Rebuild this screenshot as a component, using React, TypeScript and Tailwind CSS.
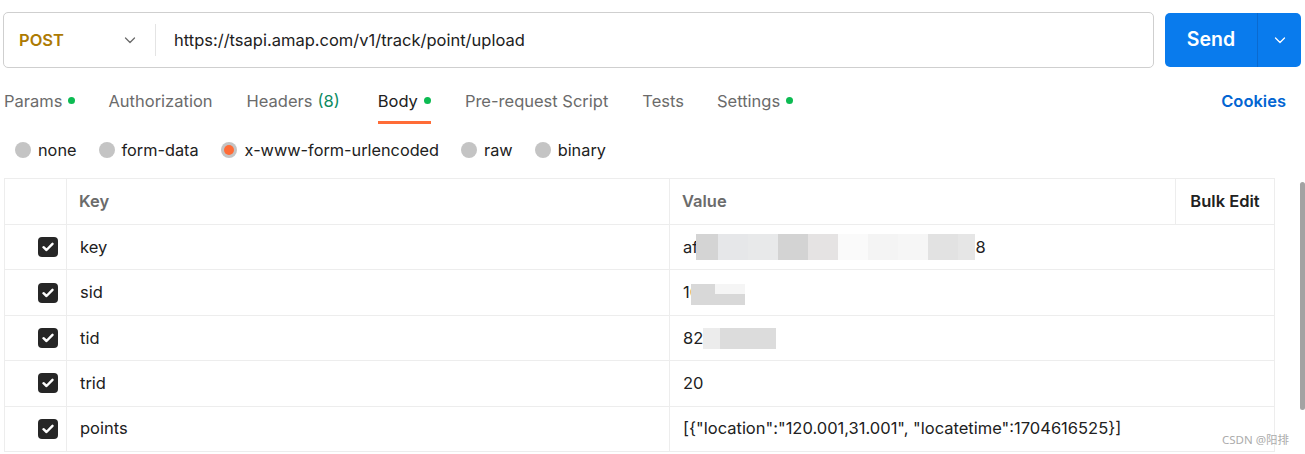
import React from "react";

const Check = () => (
  <div className="w-5 h-5 rounded-[4px] bg-[#262626] flex items-center justify-center">
    <svg width="12" height="10" viewBox="0 0 12 10" fill="none">
      <path d="M1.5 5.2 L4.5 8 L10.5 1.8" stroke="white" strokeWidth="2.4" strokeLinecap="round" strokeLinejoin="round" />
    </svg>
  </div>
);

const Chevron = ({ color = "#6b6b6b" }: { color?: string }) => (
  <svg width="14" height="14" viewBox="0 0 14 14" fill="none">
    <path d="M2.5 5 L7 9.5 L11.5 5" stroke={color} strokeWidth="1.3" strokeLinecap="round" strokeLinejoin="round" />
  </svg>
);

const Dot = () => <span className="inline-block w-[7px] h-[7px] rounded-full bg-[#0cbb52] ml-[6px] mb-[2px]" />;

type Seg = { w: number; c: string };

const Blocks = ({ segs, h = 26 }: { segs: Seg[]; h?: number }) => (
  <div className="flex" style={{ height: h }}>
    {segs.map((s, i) => (
      <div key={i} style={{ width: s.w, background: s.c }} />
    ))}
  </div>
);

const Row = ({ k, value }: { k: string; value: React.ReactNode }) => (
  <div className="flex h-[45.4px] border-b border-[#ededed]">
    <div className="w-[62px] border-r border-[#ededed] flex items-center justify-end pr-[8px]">
      <Check />
    </div>
    <div className="w-[603px] border-r border-[#ededed] flex items-center pl-[13px] text-[16.5px] text-[#212121]">{k}</div>
    <div className="flex-1 flex items-center pl-[13px] text-[16.5px] text-[#212121]">{value}</div>
  </div>
);

export default function App() {
  return (
    <div
      className="relative w-[1305px] h-[454px] bg-white overflow-hidden"
      style={{ fontFamily: "Inter, 'Noto Sans', sans-serif" }}
    >
      {/* URL bar */}
      <div className="flex pt-[12px] pl-[3px]">
        <div className="w-[1151px] h-[56px] border border-[#cfcfcf] rounded-[5px] flex items-center">
          <div className="w-[151px] flex items-center pl-[15px] pr-[18px] justify-between">
            <span className="text-[16.5px] font-semibold text-[#ad7a03]">POST</span>
            <Chevron />
          </div>
          <div className="w-px h-[32px] bg-[#e4e4e4]" />
          <div className="pl-[18px] text-[16.5px] text-[#212121]">https://tsapi.amap.com/v1/track/point/upload</div>
        </div>
        <div className="ml-[11px] mt-[1px] w-[136px] h-[54px] bg-[#097bed] rounded-[5px] flex">
          <div className="w-[92px] flex items-center justify-center text-white text-[19.5px] font-semibold">Send</div>
          <div className="w-px bg-[#0a6ad0]" />
          <div className="flex-1 flex items-center justify-center">
            <Chevron color="white" />
          </div>
        </div>
      </div>

      {/* Tabs */}
      <div className="flex items-start h-[34px] mt-[21px] pl-[4px] pr-[19px] text-[16.5px]">
        <div className="h-[24px] flex items-center text-[#6b6b6b]">Params<Dot /></div>
        <div className="ml-[33px] h-[24px] flex items-center text-[#6b6b6b]">Authorization</div>
        <div className="ml-[34px] h-[24px] flex items-center text-[#6b6b6b]">
          Headers <span className="ml-[5px] text-[#0b8a5f]">(8)</span>
        </div>
        <div className="ml-[38px] h-full flex flex-col justify-between">
          <div className="flex items-center h-[24px] text-[#212121]">Body<Dot /></div>
          <div className="h-[3px] bg-[#ff6c37] mb-[-1px]" />
        </div>
        <div className="ml-[34px] h-[24px] flex items-center text-[#6b6b6b]">Pre-request Script</div>
        <div className="ml-[34px] h-[24px] flex items-center text-[#6b6b6b]">Tests</div>
        <div className="ml-[33px] h-[24px] flex items-center text-[#6b6b6b]">Settings<Dot /></div>
        <div className="ml-auto h-[24px] flex items-center text-[#0265d2] font-semibold">Cookies</div>
      </div>

      {/* Radio */}
      <div className="flex items-center h-[24px] mt-[15px] pl-[15px] text-[16.3px] text-[#212121]">
        <span className="w-4 h-4 rounded-full bg-[#c4c4c4]" />
        <span className="ml-[7px]">none</span>
        <span className="ml-[22px] w-4 h-4 rounded-full bg-[#c4c4c4]" />
        <span className="ml-[7px]">form-data</span>
        <span className="ml-[22px] w-4 h-4 rounded-full bg-[#c4c4c4] flex items-center justify-center">
          <span className="w-[10px] h-[10px] rounded-full bg-[#ff6c37]" />
        </span>
        <span className="ml-[8px]">x-www-form-urlencoded</span>
        <span className="ml-[22px] w-4 h-4 rounded-full bg-[#c4c4c4]" />
        <span className="ml-[7px]">raw</span>
        <span className="ml-[22px] w-4 h-4 rounded-full bg-[#c4c4c4]" />
        <span className="ml-[7px]">binary</span>
      </div>

      {/* Table */}
      <div className="mt-[16px] ml-[4px] w-[1271px] border-l border-t border-r border-[#ededed]">
        <div className="flex h-[46px] border-b border-[#ededed] text-[16.5px] font-semibold">
          <div className="w-[62px] border-r border-[#ededed]" />
          <div className="w-[603px] border-r border-[#ededed] flex items-center pl-[12px] text-[#6b6b6b]">Key</div>
          <div className="w-[506px] border-r border-[#ededed] flex items-center pl-[12px] text-[#6b6b6b]">Value</div>
          <div className="flex-1 flex items-center justify-center text-[#212121]">Bulk Edit</div>
        </div>
        <Row
          k="key"
          value={
            <div className="flex items-center">
              <span>af</span>
              <div className="ml-[-2px]">
                <Blocks
                  segs={[
                    { w: 22, c: "#d4d4d4" },
                    { w: 30, c: "#e6e7e9" },
                    { w: 30, c: "#e8e9ea" },
                    { w: 30, c: "#d3d3d3" },
                    { w: 30, c: "#e5e3e3" },
                    { w: 30, c: "#fafafa" },
                    { w: 30, c: "#f4f4f4" },
                    { w: 30, c: "#f6f6f6" },
                    { w: 30, c: "#e2e2e2" },
                    { w: 17, c: "#e6e6e6" },
                  ]}
                />
              </div>
              <span>8</span>
            </div>
          }
        />
        <Row
          k="sid"
          value={
            <div className="flex items-center">
              <span>10</span>
              <div className="flex h-[21px] mt-[3px] ml-[-9px]">
                <div className="w-[24px] bg-[#d8d8d8]" />
                <div className="w-[30px] flex flex-col">
                  <div className="h-[10px] bg-[#f5f5f5]" />
                  <div className="flex-1 bg-[#d8d8d8]" />
                </div>
              </div>
            </div>
          }
        />
        <Row
          k="tid"
          value={
            <div className="flex items-center">
              <span>82</span>
              <div className="flex h-[21px] mt-[2px]">
                <div className="w-[17px] bg-[#ececec]" />
                <div className="w-[56px] bg-[#dcdcdc]" />
              </div>
            </div>
          }
        />
        <Row k="trid" value="20" />
        <Row k="points" value={'[{"location":"120.001,31.001", "locatetime":1704616525}]'} />
      </div>

      {/* Scrollbar */}
      <div className="absolute left-[1300px] top-[182px] w-[5px] h-[228px] rounded-[3px] bg-[#a3a3a3]" />

      {/* Watermark */}
      <div
        className="absolute left-[1222px] top-[431px] text-[11.5px] text-[#ababab]"
        style={{ fontFamily: "'Noto Sans', 'Noto Sans CJK SC', sans-serif" }}
      >
        CSDN @阳排
      </div>
    </div>
  );
}
